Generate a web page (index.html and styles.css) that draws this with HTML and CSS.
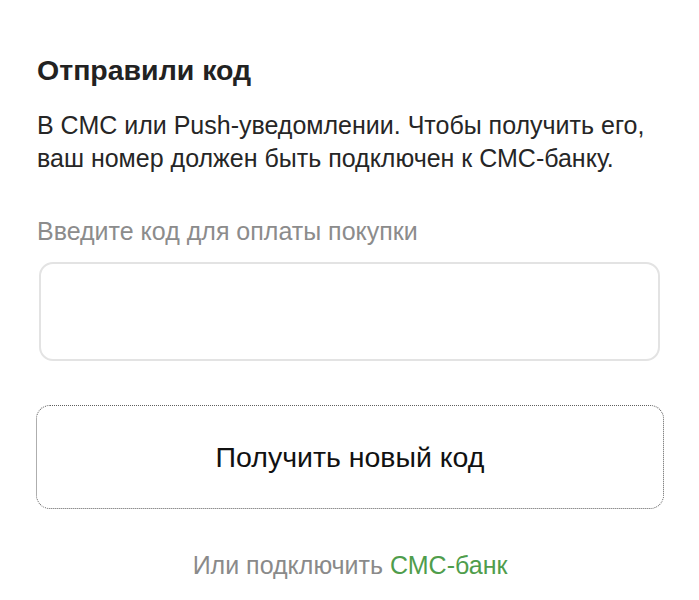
FILE: index.html
```html
<!DOCTYPE html>
<html lang="ru">
<head>
<meta charset="utf-8">
<link rel="stylesheet" href="styles.css">
</head>
<body>
<main class="page">
  <h1 class="title">Отправили код</h1>
  <p class="desc">В СМС или Push-уведомлении. Чтобы получить его, ваш номер должен быть подключен к СМС-банку.</p>
  <label class="label" for="code">Введите код для оплаты покупки</label>
  <input class="input" id="code" type="text">
  <button class="btn" type="button">Получить новый код</button>
  <p class="alt">Или подключить <a class="link" href="#">СМС-банк</a></p>
</main>
</body>
</html>
```
FILE: styles.css
```css
* { box-sizing: border-box; }
html, body { margin: 0; padding: 0; background: #fff; }
body { font-family: "Liberation Sans", Arial, sans-serif; color: #222; }
.page {
  display: flex;
  flex-direction: column;
  padding: 55px 35px 0 36px;
}
.title {
  margin: 0 0 0 1px;
  font-size: 28.5px;
  font-weight: bold;
  line-height: 30px;
  color: #222;
}
.desc {
  margin: 24px -20px 0 1px;
  font-size: 25px;
  line-height: 33px;
  color: #262626;
}
.label {
  margin: 41px 0 0 1px;
  font-size: 25px;
  line-height: 30px;
  color: #8c8c8c;
}
.input {
  margin: 16px 4px 0 3px;
  height: 99px;
  border: 2px solid #e3e3e3;
  border-radius: 14px;
  background: #fff;
  outline: none;
}
.btn {
  margin-top: 44px;
  height: 104px;
  border: 1px dotted #5f5f5f;
  border-radius: 14px;
  background: #fff;
  font-family: inherit;
  font-size: 28.5px;
  color: #111;
}
.alt {
  margin: 41px 0 0;
  text-align: center;
  font-size: 25px;
  line-height: 30px;
  color: #8a8a8a;
}
.link { color: #4f9d4c; text-decoration: none; }
```
